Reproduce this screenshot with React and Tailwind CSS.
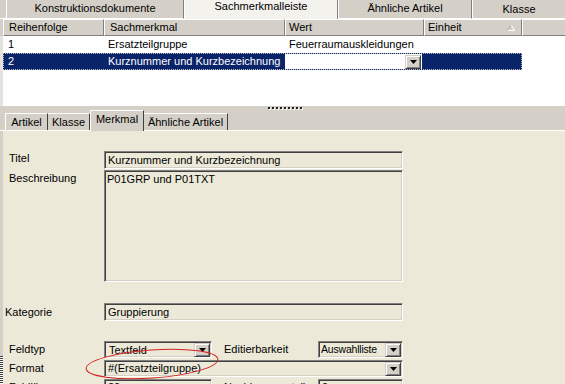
import React from "react";

const sunken =
  "box-border border border-t-[#808080] border-l-[#808080] border-b-white border-r-white shadow-[inset_1px_1px_0_#404040,inset_-1px_-1px_0_#d4d0c8]";

function DropBtn() {
  return (
    <div className="w-[16px] h-[14px] box-border bg-[#d4d0c8] border border-t-[#d4d0c8] border-l-[#d4d0c8] border-r-[#404040] border-b-[#404040] shadow-[inset_1px_1px_0_#ffffff,inset_-1px_-1px_0_#808080] flex items-center justify-center shrink-0">
      <svg width="7" height="4" viewBox="0 0 7 4">
        <path d="M0 0h7L3.5 4z" fill="#000" />
      </svg>
    </div>
  );
}

export default function App() {
  return (
    <div className="relative w-[565px] h-[384px] overflow-hidden bg-[#d4d0c8] text-[11px] leading-[13px] text-black font-['Liberation_Sans',Arial,sans-serif] flex flex-col">
      {/* top tabs */}
      <div className="flex h-[19px] shrink-0">
        <div className="w-[6px] h-[19px] box-border border-b border-b-white" />
        <div className="w-[178px] h-[19px] box-border border-l border-l-white border-r border-r-[#808080] border-b border-b-white flex items-start justify-center pt-[2px]">
          Konstruktionsdokumente
        </div>
        <div className="w-[154px] h-[19px] box-border bg-[#f3f2ed] border-l border-l-white border-r border-r-[#808080] flex items-start justify-center pt-0">
          Sachmerkmalleiste
        </div>
        <div className="w-[134px] h-[19px] box-border border-l border-l-white border-r border-r-[#808080] border-b border-b-white flex items-start justify-center pt-[2px]">
          Ähnliche Artikel
        </div>
        <div className="flex-1 h-[19px] box-border border-l border-l-white border-b border-b-white flex items-start justify-center pt-[3px]">
          Klasse
        </div>
      </div>

      {/* grid header */}
      <div className="flex h-[17px] shrink-0">
        <div className="w-[3px]" />
        <div className="w-[101px] box-border border-t border-t-white border-l border-l-white border-r border-r-[#808080] border-b border-b-[#808080] flex items-center pl-[5px]">
          Reihenfolge
        </div>
        <div className="w-[181px] box-border border-t border-t-white border-l border-l-white border-r border-r-[#808080] border-b border-b-[#808080] flex items-center pl-[5px]">
          Sachmerkmal
        </div>
        <div className="w-[139px] box-border border-t border-t-white border-l border-l-white border-r border-r-[#808080] border-b border-b-[#808080] flex items-center pl-[3px]">
          Wert
        </div>
        <div className="w-[98px] box-border border-t border-t-white border-l border-l-white border-r border-r-[#808080] border-b border-b-[#808080] flex items-center pl-[3px] pr-[6px] justify-between">
          <span>Einheit</span>
          <svg width="8" height="7" viewBox="0 0 8 7">
            <path d="M4 0.5L7.5 6.5H0.5z" fill="none" stroke="#ffffff" strokeWidth="1" />
            <path d="M4 0.5L0.5 6.5" fill="none" stroke="#a0a0a0" strokeWidth="1" />
          </svg>
        </div>
        <div className="w-[43px] box-border border-t border-t-white border-l border-l-white border-b border-b-[#808080]" />
      </div>

      {/* grid body */}
      <div className="flex h-[70px] shrink-0">
        <div className="w-[3px] bg-[#e4e2dc]" />
        <div className="flex-1 bg-white flex flex-col">
          <div className="flex h-[17px] items-center">
            <div className="w-[101px] pl-[5px]">1</div>
            <div className="w-[181px] pl-[4px]">Ersatzteilgruppe</div>
            <div className="w-[139px] pl-[4px]">Feuerraumauskleidungen</div>
          </div>
          <div className="flex h-[17px] w-[519px] bg-[#0a246a] text-white items-center outline-1 outline-dotted outline-[#c0c0c0] -outline-offset-1">
            <div className="w-[101px] pl-[5px]">2</div>
            <div className="w-[181px] pl-[4px]">Kurznummer und Kurzbezeichnung</div>
            <div className="w-[137px] h-[15px] bg-white flex items-center justify-end pr-[1px]">
              <DropBtn />
            </div>
          </div>
        </div>
      </div>

      {/* splitter + lower tabs */}
      <div className="h-[4px] shrink-0 flex items-start pl-[268px] pt-[1px] gap-[2px]">
        {Array.from({ length: 9 }).map((_, i) => (
          <div key={i} className="w-[2px] h-[2px] bg-[#202020] shadow-[1px_1px_0_#ffffff]" />
        ))}
      </div>
      <div className="h-[20px] shrink-0 flex items-end pl-[5px] relative z-10">
        <div className="w-[43px] h-[17px] box-border border-t border-t-white border-l border-l-white border-r border-r-[#404040] flex items-center justify-center">
          Artikel
        </div>
        <div className="w-[42px] h-[17px] box-border border-t border-t-white border-r border-r-[#404040] flex items-center justify-center">
          Klasse
        </div>
        <div className="w-[54px] h-[21px] -mb-[1px] box-border bg-[#d4d0c8] border-t border-t-white border-l border-l-white border-r border-r-[#404040] flex items-start justify-center pt-[2px]">
          Merkmal
        </div>
        <div className="w-[84px] h-[17px] box-border border-t border-t-white border-r border-r-[#404040] flex items-center justify-center">
          Ähnliche Artikel
        </div>
      </div>

      {/* panel */}
      <div className="flex-1 flex border-t border-t-white">
        <div className="w-[3px] bg-[#d4d0c8] flex flex-col justify-end">
          <div className="h-[40px] w-[3px] bg-[repeating-linear-gradient(to_bottom,#404040_0_1px,#ffffff_1px_2px)]" />
        </div>
        <div className="flex-1 bg-[#ece9d8] flex flex-col pt-[20px]">
          {/* Titel */}
          <div className="flex items-start">
            <div className="w-[101px] pl-[6px] pt-[1px]">Titel</div>
            <div className={`${sunken} w-[299px] h-[18px] flex items-center pl-[3px]`}>
              Kurznummer und Kurzbezeichnung
            </div>
          </div>
          {/* Beschreibung */}
          <div className="flex items-start mt-[1px]">
            <div className="w-[101px] pl-[6px] pt-[2px]">Beschreibung</div>
            <div className={`${sunken} w-[299px] h-[112px] pl-[2px] pt-[2px]`}>
              P01GRP und P01TXT
            </div>
          </div>
          {/* Kategorie */}
          <div className="flex items-center mt-[21px]">
            <div className="w-[101px] pl-[2px]">Kategorie</div>
            <div className={`${sunken} w-[299px] h-[18px] flex items-center pl-[3px]`}>
              Gruppierung
            </div>
          </div>
          {/* Feldtyp */}
          <div className="flex items-center mt-[20px]">
            <div className="w-[101px] pl-[6px]">Feldtyp</div>
            <div className={`${sunken} w-[108px] h-[17px] flex items-center justify-between pl-[4px] pr-[1px]`}>
              <span className="pt-[2px]">Textfeld</span>
              <DropBtn />
            </div>
            <div className="w-[106px] pl-[12px]">Editierbarkeit</div>
            <div className={`${sunken} w-[85px] h-[17px] flex items-center justify-between pl-[2px] pr-[1px]`}>
              <span className="min-w-0 overflow-hidden whitespace-nowrap text-[10.5px] tracking-[-0.2px]">Auswahlliste</span>
              <DropBtn />
            </div>
          </div>
          {/* Format */}
          <div className="flex items-center mt-[2px]">
            <div className="w-[101px] pl-[6px]">Format</div>
            <div className={`${sunken} w-[299px] h-[17px] flex items-center justify-between pl-[3px] pr-[1px]`}>
              <span>#(Ersatzteilgruppe)</span>
              <DropBtn />
            </div>
          </div>
          {/* Feldlänge */}
          <div className="flex items-start mt-[2px]">
            <div className="w-[101px] pl-[6px] pt-[2px]">Feldlänge</div>
            <div className={`${sunken} w-[108px] h-[17px] flex items-center pl-[3px]`}>
              30
            </div>
            <div className="w-[106px] pl-[12px] pt-[2px]">Nachkommastellen</div>
            <div className={`${sunken} w-[85px] h-[17px] flex items-center pl-[3px]`}>
              0
            </div>
          </div>
        </div>
      </div>

      {/* red annotation ellipse */}
      <svg className="absolute inset-0 pointer-events-none z-20" width="565" height="384" viewBox="0 0 565 384">
        <ellipse cx="152" cy="364" rx="66" ry="14" fill="none" stroke="#d42020" strokeWidth="1" transform="rotate(-4 152 364)" />
      </svg>
    </div>
  );
}
